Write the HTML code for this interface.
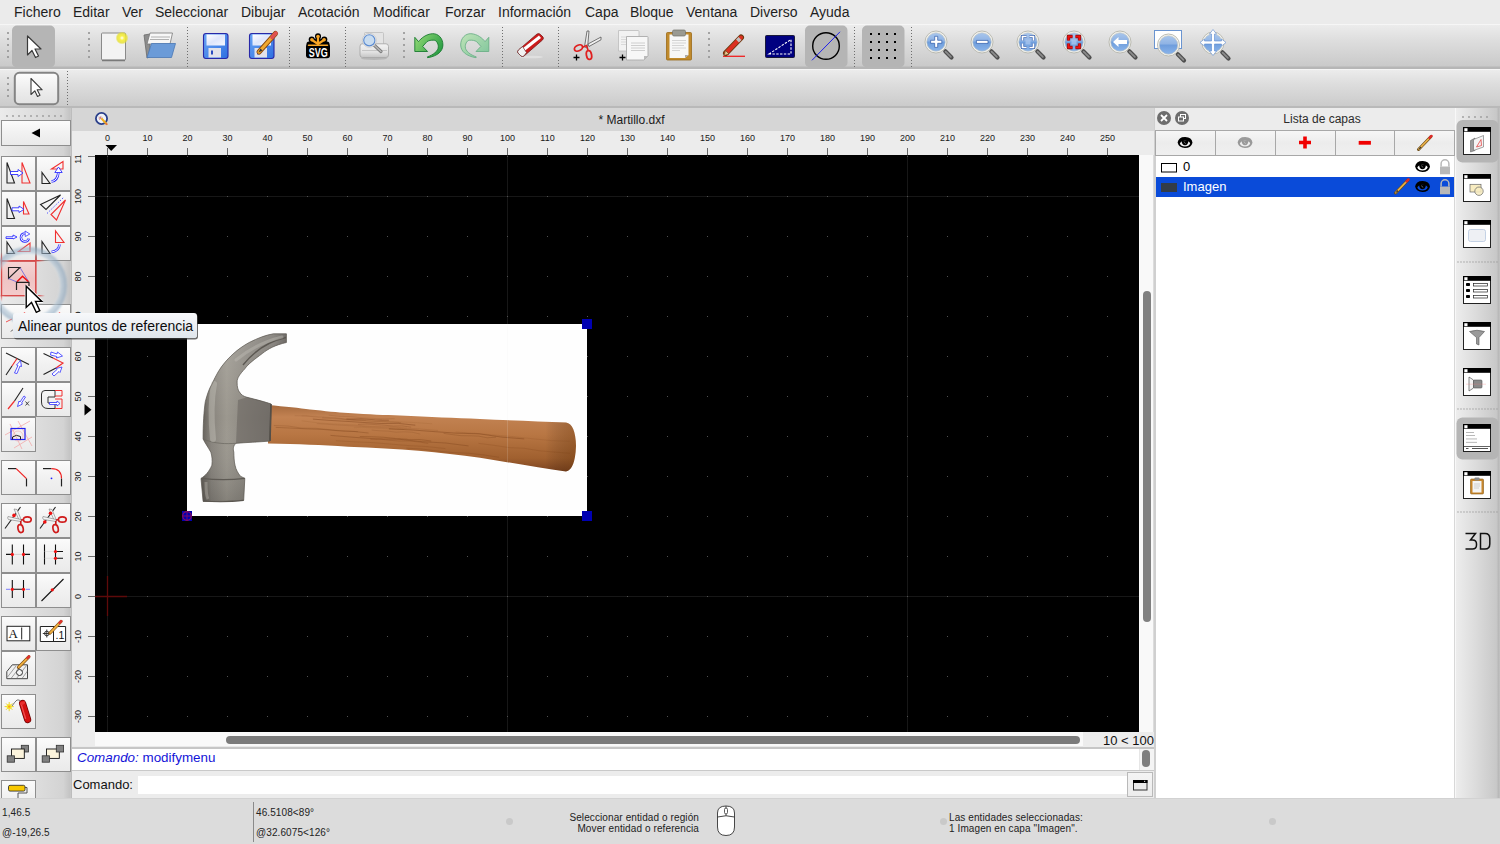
<!DOCTYPE html>
<html><head><meta charset="utf-8">
<style>
*{box-sizing:border-box}
html,body{margin:0;padding:0}
body{width:1500px;height:844px;overflow:hidden;position:relative;background:#e9e9e9;font-family:"Liberation Sans",sans-serif;color:#000}
.a{position:absolute}
#menubar{left:0;top:0;width:1500px;height:24px;background:#ebebeb}
#menubar span{position:absolute;top:3.5px;font-size:14px;line-height:16px;color:#1e1e1e}
#tb1{left:0;top:24px;width:1500px;height:45px;background:linear-gradient(#f6f6f6 0px,#f6f6f6 1px,#ececec 1px,#dedede 16px,#cacaca 42px,#b6b6b6 43px,#b6b6b6 45px)}
#tb2{left:0;top:69px;width:1500px;height:39px;background:linear-gradient(#f6f6f6 0px,#f6f6f6 1px,#ececec 1px,#dedede 14px,#cbcbcb 37px,#b8b8b8 37px,#b8b8b8 39px)}
.vdots{position:absolute;width:3px;background-image:radial-gradient(circle,#8a8a8a 0.9px,transparent 1.2px);background-size:3px 6px}
.vsep{position:absolute;width:1px;background-image:linear-gradient(#7a7a7a 50%,transparent 50%);background-size:1px 3px}
.hdots{position:absolute;height:3px;background-image:radial-gradient(circle,#9a9a9a 0.9px,transparent 1.2px);background-size:6px 3px}
.sel{position:absolute;background:#b8b8b8;border-radius:5px}
.ic{position:absolute;overflow:visible}
#left{left:0;top:107px;width:72px;height:691px;background:linear-gradient(90deg,#ebebeb,#d3d3d3 88%,#c4c4c4 97%,#d0d0d0)}
.tb{position:absolute;width:35px;height:35px;border:1px solid #8e8e8e;background:linear-gradient(#fbfbfb,#f1f1f1 50%,#eaeaea)}
.tb svg{position:absolute;left:0;top:0}
#mdititle{left:72px;top:107px;width:1082px;height:24px;background:#d6d6d6}
#rulert{left:72px;top:131px;width:1082px;height:24px;background:#ececec}
#rulerl{left:72px;top:155px;width:23px;height:591px;background:#ececec}
#canvas{left:95px;top:155px;width:1044px;height:577px;background:#000;overflow:hidden}
#vscroll{left:1139px;top:155px;width:15px;height:577px;background:#f9f9f9;border-right:1px solid #dcdcdc}
#hscroll{left:95px;top:732px;width:988px;height:14px;background:#f9f9f9}
#zoomlbl{left:1083px;top:732px;width:71px;height:15px;background:#ececec;font-size:13px;line-height:17px;text-align:right;color:#111}
#cmdsep{left:72px;top:746px;width:1082px;height:3px;background:linear-gradient(#e6e6e6,#bdbdbd)}
#hist{left:72px;top:749px;width:1082px;height:22px;background:#fff;border-bottom:1px solid #c6c6c6}
#cmdrow{left:72px;top:771px;width:1082px;height:27px;background:#ececec}
#dock{left:1154px;top:107px;width:301px;height:691px;background:#ececec}
#rtb{left:1455px;top:107px;width:45px;height:692px;background:linear-gradient(90deg,#f8f8f8 0px,#f8f8f8 1px,#ededed 1px,#dcdcdc 45%,#c8c8c8 92%,#b8b8b8 97%,#c4c4c4)}
#status{left:0;top:798px;width:1500px;height:46px;background:#dcdcdc;border-top:1px solid #d2d2d2}
.st{position:absolute;font-size:10px;line-height:12px;color:#222;white-space:nowrap;letter-spacing:0.1px}
.dot{position:absolute;width:7px;height:7px;border-radius:50%;background:#c9c9c9}
</style></head><body>

<div id="menubar" class="a">
<span style="left:14px">Fichero</span>
<span style="left:73px">Editar</span>
<span style="left:122px">Ver</span>
<span style="left:155px">Seleccionar</span>
<span style="left:241px">Dibujar</span>
<span style="left:298px">Acotación</span>
<span style="left:373px">Modificar</span>
<span style="left:445px">Forzar</span>
<span style="left:498px">Información</span>
<span style="left:585px">Capa</span>
<span style="left:630px">Bloque</span>
<span style="left:686px">Ventana</span>
<span style="left:750px">Diverso</span>
<span style="left:810px">Ayuda</span>
</div>

<div id="tb1" class="a"></div>
<div id="tb2" class="a"></div>

<svg class="a" style="left:0;top:0" width="1500" height="107" viewBox="0 0 1500 107">
<defs>
<linearGradient id="gLens" x1="0" y1="0" x2="0" y2="1"><stop offset="0" stop-color="#a9c6ec"/><stop offset="0.45" stop-color="#8fb3e4"/><stop offset="0.5" stop-color="#6e9ddc"/><stop offset="1" stop-color="#8ab4ea"/></linearGradient>
<radialGradient id="gRing" cx="0.5" cy="0.5" r="0.5"><stop offset="0.8" stop-color="#f4f4ee"/><stop offset="0.9" stop-color="#d4d4cc"/><stop offset="1" stop-color="#a8a8a0"/></radialGradient>
<linearGradient id="gFloppy" x1="0" y1="0" x2="1" y2="1"><stop offset="0" stop-color="#6aa5f5"/><stop offset="1" stop-color="#2f6fe0"/></linearGradient>
<linearGradient id="gLabel" x1="0" y1="0" x2="1" y2="1"><stop offset="0" stop-color="#ffffff"/><stop offset="0.5" stop-color="#dfe6fb"/><stop offset="1" stop-color="#f4f6ff"/></linearGradient>
<linearGradient id="gGreen" x1="0" y1="0" x2="1" y2="0.6"><stop offset="0" stop-color="#98dc78"/><stop offset="1" stop-color="#2a9e44"/></linearGradient>
<linearGradient id="gGreenR" x1="1" y1="0" x2="0" y2="1"><stop offset="0" stop-color="#c0e4b8"/><stop offset="1" stop-color="#7cc49a"/></linearGradient>
<radialGradient id="gGlow" cx="0.5" cy="0.5" r="0.5"><stop offset="0" stop-color="#ffffff"/><stop offset="0.35" stop-color="#f8f04a"/><stop offset="0.75" stop-color="#e6e030" stop-opacity="0.8"/><stop offset="1" stop-color="#e6e030" stop-opacity="0"/></radialGradient>
<g id="mag">
 <path d="M9.3 9.3 L15.5 15.5" stroke="#4e4e4e" stroke-width="4.2" stroke-linecap="round"/>
 <path d="M9.6 9.6 L15.2 15.2" stroke="#8c8c8c" stroke-width="1.8" stroke-linecap="round" stroke-dasharray="1 0.6"/>
 <circle cx="0" cy="0" r="11" fill="#f6f6f2" stroke="#b4b4aa" stroke-width="0.9"/>
 <circle cx="0" cy="0" r="9.3" fill="url(#gLens)" stroke="#c8c8be" stroke-width="0.6"/>
</g>
</defs>
<!-- toolbar 1 handles -->
<g fill="#8e8e8e">
 <circle cx="8" cy="33" r="1"/><circle cx="8" cy="39" r="1"/><circle cx="8" cy="45" r="1"/><circle cx="8" cy="51" r="1"/><circle cx="8" cy="57" r="1"/>
 <circle cx="89" cy="33" r="1"/><circle cx="89" cy="39" r="1"/><circle cx="89" cy="45" r="1"/><circle cx="89" cy="51" r="1"/><circle cx="89" cy="57" r="1"/>
 <circle cx="404" cy="33" r="1"/><circle cx="404" cy="39" r="1"/><circle cx="404" cy="45" r="1"/><circle cx="404" cy="51" r="1"/><circle cx="404" cy="57" r="1"/>
 <circle cx="709" cy="33" r="1"/><circle cx="709" cy="39" r="1"/><circle cx="709" cy="45" r="1"/><circle cx="709" cy="51" r="1"/><circle cx="709" cy="57" r="1"/>
 <circle cx="8" cy="78" r="1"/><circle cx="8" cy="84" r="1"/><circle cx="8" cy="90" r="1"/><circle cx="8" cy="96" r="1"/>
</g>
<g stroke="#6e6e6e" stroke-width="1" stroke-dasharray="1 2">
 <path d="M187.5 27V67M289.5 27V67M345.5 27V67M502.5 27V67M558.5 27V67M854.5 27V67M911.5 27V67"/>
 <path d="M67.5 71V106"/>
</g>
<!-- selected buttons -->
<rect x="12" y="25.5" width="43" height="42" rx="5" fill="#b5b5b5"/>
<rect x="805" y="25.5" width="42.5" height="42" rx="5" fill="#b5b5b5"/>
<rect x="862" y="25.5" width="42.5" height="42" rx="5" fill="#b5b5b5"/>
<!-- arrow cursor icon -->
<path d="M27.5 36 V55 L32 50.5 L35.5 57.5 L38.5 56 L35 49 H41 Z" fill="#fff" stroke="#3a3a3a" stroke-width="1.2" stroke-linejoin="round"/>
<!-- new doc -->
<rect x="101.5" y="33" width="24" height="27" rx="1" fill="#f3f3f3" stroke="#8a8a8a" stroke-width="1"/>
<path d="M102 60.5H125" stroke="#7a7a7a" stroke-width="1.5"/>
<circle cx="122" cy="38" r="6.5" fill="url(#gGlow)"/>
<!-- open folder -->
<path d="M144 35 L150 34 L150 57 L147 58 Z" fill="#8d8d8d" stroke="#6a6a6a" stroke-width="0.8"/>
<path d="M150 33 H172.5 L170 44 H147 Z" fill="#f6f6f6" stroke="#7a7a7a" stroke-width="0.8"/>
<path d="M151 37H170M150 39.5H169" stroke="#b0b0b0" stroke-width="1"/>
<path d="M151.5 43.5 H175.5 L171.5 57.5 H147 Z" fill="#6b9bd8" stroke="#4a77b4" stroke-width="0.8"/>
<!-- save -->
<rect x="203.5" y="33.5" width="24.5" height="25" rx="2.5" fill="url(#gFloppy)" stroke="#2828a8" stroke-width="1.1"/>
<rect x="206.5" y="34.5" width="18.5" height="11" fill="url(#gLabel)"/>
<rect x="208.5" y="48" width="12.5" height="9.5" fill="#e2e2ea"/>
<rect x="211" y="50.5" width="2" height="4" fill="#2a4cc0"/>
<!-- save as -->
<rect x="249.5" y="33.5" width="24.5" height="25" rx="2.5" fill="url(#gFloppy)" stroke="#2828a8" stroke-width="1.1"/>
<rect x="252.5" y="34.5" width="18.5" height="11" fill="url(#gLabel)"/>
<rect x="254.5" y="48" width="12.5" height="9.5" fill="#e2e2ea"/>
<rect x="257" y="50.5" width="2" height="4" fill="#2a4cc0"/>
<path d="M259 52 L275.5 33.5" stroke="#8a4a10" stroke-width="5" stroke-linecap="round"/>
<path d="M259 52 L275.5 33.5" stroke="#f0a830" stroke-width="3.2" stroke-linecap="round"/>
<path d="M272 37.5 L276 33" stroke="#e05050" stroke-width="3.5" stroke-linecap="round"/>
<path d="M258.5 52.5 L260.5 48.5 L262.5 50.5 Z" fill="#333"/>
<!-- SVG logo -->
<g>
 <rect x="306" y="43.5" width="24" height="14.8" rx="3" fill="#000"/>
 <g stroke="#000" stroke-width="5" stroke-linecap="round">
  <path d="M318 44V36.5M318 44L311.8 39.8M318 44L324.3 39.8M318 44H309M318 44H327"/>
 </g>
 <g fill="#000"><circle cx="318" cy="36.3" r="3"/><circle cx="311.7" cy="39.6" r="3"/><circle cx="324.3" cy="39.6" r="3"/></g>
 <g stroke="#f7a525" stroke-width="2.2" stroke-linecap="round">
  <path d="M318 44V37M318 44L312 40M318 44L324 40"/>
 </g>
 <g fill="#f7a525"><circle cx="318" cy="36.6" r="1.8"/><circle cx="311.9" cy="39.8" r="1.8"/><circle cx="324.1" cy="39.8" r="1.8"/></g>
 <path d="M308.5 45.3H327.5" stroke="#f7a525" stroke-width="1.5" stroke-linecap="round"/>
 <text x="318.2" y="57" font-family="Liberation Sans" font-weight="bold" font-size="13" fill="#fff" text-anchor="middle" textLength="19" lengthAdjust="spacingAndGlyphs">SVG</text>
</g>
<!-- print preview -->
<defs><linearGradient id="gPrn" x1="0" y1="0" x2="0" y2="1"><stop offset="0" stop-color="#f4f4f4"/><stop offset="0.6" stop-color="#e2e2e2"/><stop offset="1" stop-color="#c4c4c4"/></linearGradient></defs>
<ellipse cx="374" cy="58.5" rx="13" ry="1.5" fill="#000" opacity="0.12"/>
<rect x="364.5" y="32.5" width="19" height="13" rx="1" fill="#e4e4e4" stroke="#bdbdbd" stroke-width="0.8"/>
<path d="M362 43.8 H386 Q388.5 43.8 388.5 46.5 V55 Q388.5 57.5 386 57.5 H362.5 Q360 57.5 360 55 V46.5 Q360 43.8 362 43.8 Z" fill="url(#gPrn)" stroke="#a8a8a8" stroke-width="0.9"/>
<path d="M362 50.5H387" stroke="#bcbcbc" stroke-width="0.8"/>
<path d="M373.5 44.5 L381 51.5" stroke="#7a7a7a" stroke-width="3.2" stroke-linecap="round"/>
<path d="M373.5 44.5 L381 51.5" stroke="#b8b8b8" stroke-width="1.4" stroke-linecap="round"/>
<circle cx="369.3" cy="40.3" r="7" fill="#f2f2f2" stroke="#c4c4c4" stroke-width="0.8"/>
<circle cx="369.3" cy="40.3" r="5.6" fill="#c8dcf0" stroke="#5a8ad0" stroke-width="1.1"/>
<!-- undo -->
<path d="M414.8 37.3 L418.5 41.6 C421 38.5 426 34 432.7 33.7 C438 33.5 443 38 442.9 45 C442.8 51 438 56 427.6 57.7 L427.3 56.9 C433 55 438.5 51 438.3 46.7 C438.3 43 436 40 433.8 40.2 C431 40 429 40.5 427 41.6 L422.7 46.4 L427.6 51.5 L414.8 51.5 Z" fill="url(#gGreen)" stroke="#1a7a30" stroke-width="0.9" stroke-linejoin="round"/>
<!-- redo -->
<g transform="translate(903.6 0) scale(-1 1)"><path d="M414.8 37.3 L418.5 41.6 C421 38.5 426 34 432.7 33.7 C438 33.5 443 38 442.9 45 C442.8 51 438 56 427.6 57.7 L427.3 56.9 C433 55 438.5 51 438.3 46.7 C438.3 43 436 40 433.8 40.2 C431 40 429 40.5 427 41.6 L422.7 46.4 L427.6 51.5 L414.8 51.5 Z" fill="url(#gGreenR)" stroke="#6cb088" stroke-width="0.9" stroke-linejoin="round"/></g>
<!-- eraser -->
<ellipse cx="531" cy="57" rx="12" ry="1.3" fill="#e0e0e0"/>
<path d="M518.5 50 L537 34 Q539 33 540.5 34.5 L543 37 Q544 38.5 542.5 40 L524 56 Q522.5 57 521 56 L518 53 Q517 51.5 518.5 50 Z" fill="#cc1a1a" stroke="#7a1a1a" stroke-width="0.8"/>
<path d="M522.5 48.5 L539 35.5 L541 38 L524.5 51 Z" fill="#ffffff"/>
<path d="M518.5 50 L522.5 46.5 L526.5 52.5 L524 56 Q522.5 57 521 56 L518 53 Q517 51.5 518.5 50 Z" fill="#f2f2f2" stroke="#6a3030" stroke-width="0.7"/>
<!-- cut -->
<path d="M587 31 L584.5 47 L587.5 48 L589 31 Z" fill="#f0f0f0" stroke="#555" stroke-width="0.8"/>
<path d="M601 37 L588 44 L589 46.5 L601 39.8 Z" fill="#f0f0f0" stroke="#555" stroke-width="0.8"/>
<ellipse cx="578.5" cy="48" rx="4.3" ry="2.8" transform="rotate(-25 578.5 48)" fill="none" stroke="#e02020" stroke-width="1.8"/>
<ellipse cx="589" cy="55" rx="2.6" ry="4.4" transform="rotate(-10 589 55)" fill="none" stroke="#e02020" stroke-width="1.8"/>
<path d="M582 47.5 L586.5 45.5 L588 50" stroke="#e02020" stroke-width="1.6" fill="none"/>
<path d="M576.5 54.5V60.5M573.5 57.5H579.5" stroke="#000" stroke-width="1.3"/>
<!-- copy -->
<path d="M618.5 30.5 H638 Q639 30.5 639 31.5 V51 H618.5 Z" fill="#f2f2f2" stroke="#bdbdbd" stroke-width="0.8"/>
<path d="M621 37H636M621 39.5H636M621 42H636M621 44.5H636" stroke="#d2d2d2" stroke-width="0.8"/>
<path d="M626.5 36.5 H647.5 Q648 36.5 648 37.5 V56 L644 60 H626.5 Z" fill="#f7f7f7" stroke="#aaaaaa" stroke-width="0.9"/>
<path d="M644 60 V56 H648 Z" fill="#bbb"/>
<path d="M631 43H645M631 45.5H645M631 48H645M631 50.5H645" stroke="#c8c8c8" stroke-width="0.9"/>
<path d="M622.5 54.5V60.5M619.5 57.5H625.5" stroke="#000" stroke-width="1.3"/>
<!-- paste -->
<rect x="666.5" y="32.5" width="25" height="27.5" rx="1" fill="#c08a2c" stroke="#9a6a18" stroke-width="0.8"/>
<path d="M669.5 34.5 H688.5 V55 L685 58 H669.5 Z" fill="#f7f7f7"/>
<path d="M685 58 V55 H688.5 Z" fill="#aaa"/>
<path d="M672 40.5H686M672 43H686M672 45.5H684M672 48H686M672 50.5H680" stroke="#cfcfcf" stroke-width="0.9"/>
<rect x="672.5" y="30" width="13" height="6" rx="1.5" fill="#9a9a92" stroke="#707068" stroke-width="0.7"/>
<!-- pencil -->
<path d="M723 56.3H745" stroke="#f02020" stroke-width="1.3"/>
<path d="M726 53 L741 37.5" stroke="#6a3a10" stroke-width="6" stroke-linecap="round"/>
<path d="M726 53 L741 37.5" stroke="#dc3020" stroke-width="4" stroke-linecap="round"/>
<path d="M737.5 41 L740 38.5" stroke="#c0c0c0" stroke-width="4"/>
<path d="M724 55.5 L725.5 50.5 L729 54 Z" fill="#e8c890" stroke="#5a3a10" stroke-width="0.6"/>
<!-- blue triangle -->
<rect x="765.5" y="35.5" width="29" height="22" rx="1" fill="#000080" stroke="#1a1a3a" stroke-width="1"/>
<path d="M769 54 L791 39.5 V54 Z" fill="none" stroke="#fff" stroke-width="1.1" stroke-dasharray="2.4 1.4"/>
<!-- circle with line -->
<circle cx="826" cy="46" r="13.3" fill="none" stroke="#000" stroke-width="1.4"/>
<path d="M812 60.3 L840 31.8" stroke="#1010f0" stroke-width="0.9"/>
<!-- grid dots -->
<g fill="#000">
 <rect x="870" y="33" width="2" height="2"/><rect x="878" y="33" width="2" height="2"/><rect x="886" y="33" width="2" height="2"/><rect x="894" y="33" width="2" height="2"/>
 <rect x="870" y="41" width="2" height="2"/><rect x="878" y="41" width="2" height="2"/><rect x="886" y="41" width="2" height="2"/><rect x="894" y="41" width="2" height="2"/>
 <rect x="870" y="49" width="2" height="2"/><rect x="878" y="49" width="2" height="2"/><rect x="886" y="49" width="2" height="2"/><rect x="894" y="49" width="2" height="2"/>
 <rect x="870" y="57" width="2" height="2"/><rect x="878" y="57" width="2" height="2"/><rect x="886" y="57" width="2" height="2"/><rect x="894" y="57" width="2" height="2"/>
</g>
<!-- zoom icons -->
<use href="#mag" x="936" y="42"/>
<path d="M934.7 36.3 H937.7 V40.3 H941.8 V43.3 H937.7 V47.4 H934.7 V43.3 H930.6 V40.3 H934.7 Z" fill="#fff" stroke="#2a58a8" stroke-width="0.7"/>
<use href="#mag" x="982" y="42"/>
<path d="M976.4 40.4 H988 V43.4 H976.4 Z" fill="#fff" stroke="#2a58a8" stroke-width="0.7"/>
<use href="#mag" x="1028" y="42"/>
<path d="M1022.5 40.5V36.5H1026.5M1029.5 36.5H1033.5V40.5M1033.5 43.5V47.5H1029.5M1026.5 47.5H1022.5V43.5" stroke="#3a64b0" stroke-width="3.2" fill="none"/><path d="M1022.5 40.5V36.5H1026.5M1029.5 36.5H1033.5V40.5M1033.5 43.5V47.5H1029.5M1026.5 47.5H1022.5V43.5" stroke="#fff" stroke-width="1.7" fill="none"/><rect x="1025.5" y="39.5" width="5" height="5" fill="#a8c4ec" opacity="0.8"/>
<use href="#mag" x="1074" y="42"/>
<path d="M1068.5 40.5V36.5H1072.5M1075.5 36.5H1079.5V40.5M1079.5 43.5V47.5H1075.5M1072.5 47.5H1068.5V43.5" stroke="#7a1010" stroke-width="3.3" fill="none"/><path d="M1068.5 40.5V36.5H1072.5M1075.5 36.5H1079.5V40.5M1079.5 43.5V47.5H1075.5M1072.5 47.5H1068.5V43.5" stroke="#f01010" stroke-width="2" fill="none"/><rect x="1071.5" y="39.5" width="5" height="5" fill="#a8c4ec" opacity="0.8"/>
<use href="#mag" x="1120" y="42"/>
<path d="M1113 42 L1118.5 37 V40 H1127 V44 H1118.5 V47 Z" fill="#fff"/>
<rect x="1154.5" y="30.5" width="27" height="18" fill="#fff" stroke="#6a94d0" stroke-width="1"/>
<use href="#mag" x="1168.5" y="45"/>
<use href="#mag" x="1213" y="43"/>
<g fill="#fff" stroke="#5a8ad0" stroke-width="0.6">
 <path d="M1213 29.5 L1216.5 34 H1214.5 V41 H1221.5 V39 L1226 42.5 L1221.5 46 V44 H1214.5 V51 H1216.5 L1213 55.5 L1209.5 51 H1211.5 V44 H1204.5 V46 L1200 42.5 L1204.5 39 V41 H1211.5 V34 H1209.5 Z"/>
</g>
<!-- toolbar 2 button -->
<rect x="14.8" y="72.8" width="43.4" height="31.4" rx="4.5" fill="url(#gBtn2)" stroke="#848484" stroke-width="2"/>
<path d="M31 78.5 V94.5 L34.8 90.8 L37.5 96.5 L40 95.3 L37.2 89.8 H42.2 Z" fill="#fff" stroke="#3a3a3a" stroke-width="1.1" stroke-linejoin="round"/>
<linearGradient id="gBtn2" x1="0" y1="0" x2="0" y2="1"><stop offset="0" stop-color="#fdfdfd"/><stop offset="0.5" stop-color="#eeeeee"/><stop offset="1" stop-color="#e2e2e2"/></linearGradient>
</svg>

<div id="left" class="a"></div>
<div class="tb" style="left:1px;top:120px;width:70px;height:26px"></div>
<div class="tb" style="left:1px;top:156px"></div>
<div class="tb" style="left:36px;top:156px"></div>
<div class="tb" style="left:1px;top:191px"></div>
<div class="tb" style="left:36px;top:191px"></div>
<div class="tb" style="left:1px;top:226px"></div>
<div class="tb" style="left:36px;top:226px"></div>
<div class="tb" style="left:1px;top:261px;background:linear-gradient(#f4d4d4,#efc4c4 50%,#f3caca);border-color:#d06a6a"></div>
<div class="tb" style="left:1px;top:304px;width:70px"></div>
<div class="tb" style="left:1px;top:347px"></div>
<div class="tb" style="left:36px;top:347px"></div>
<div class="tb" style="left:1px;top:382px"></div>
<div class="tb" style="left:36px;top:382px"></div>
<div class="tb" style="left:1px;top:417px"></div>
<div class="tb" style="left:1px;top:460px"></div>
<div class="tb" style="left:36px;top:460px"></div>
<div class="tb" style="left:1px;top:503px"></div>
<div class="tb" style="left:36px;top:503px"></div>
<div class="tb" style="left:1px;top:538px"></div>
<div class="tb" style="left:36px;top:538px"></div>
<div class="tb" style="left:1px;top:573px"></div>
<div class="tb" style="left:36px;top:573px"></div>
<div class="tb" style="left:1px;top:616px"></div>
<div class="tb" style="left:36px;top:616px"></div>
<div class="tb" style="left:1px;top:651px"></div>
<div class="tb" style="left:1px;top:694px"></div>
<div class="tb" style="left:1px;top:737px"></div>
<div class="tb" style="left:36px;top:737px"></div>
<div class="tb" style="left:1px;top:780px"></div>

<svg class="a" style="left:0;top:107px" width="72" height="691" viewBox="0 107 72 691">
<defs>
<marker id="ah" viewBox="0 0 6 6" refX="3" refY="3" markerWidth="4" markerHeight="4" orient="auto"><path d="M0 0L6 3L0 6Z" fill="#2020ff"/></marker>
</defs>
<g fill="#9a9a9a"><circle cx="7" cy="116" r="0.9"/><circle cx="13" cy="116" r="0.9"/><circle cx="19" cy="116" r="0.9"/><circle cx="25" cy="116" r="0.9"/><circle cx="31" cy="116" r="0.9"/><circle cx="37" cy="116" r="0.9"/><circle cx="43" cy="116" r="0.9"/><circle cx="49" cy="116" r="0.9"/><circle cx="55" cy="116" r="0.9"/><circle cx="61" cy="116" r="0.9"/></g>
<path d="M31.5 133 L40 128.5 V137.5 Z" fill="#000"/>
<g fill="none" stroke-width="1.1" stroke-linejoin="miter">
<!-- B1 -->
<path d="M7 162.5 V183 H14.5 Z" stroke="#222"/>
<path d="M22 162.5 V183 H30 Z" stroke="#f03030"/>
<path d="M10.5 171.5 H18 V169.5 L23 173 L18 176.5 V174.5 H10.5 Z" fill="#fff" stroke="#3030ff" stroke-width="0.9"/>
<path d="M42 172.5 V183.5 H50 Z" stroke="#222"/>
<path d="M51.5 169 L63 161.5 V169 Z" stroke="#f03030"/>
<path d="M51.5 181.5 Q57.5 181 58.5 172" stroke="#3030ff" stroke-width="2.6"/>
<path d="M51.5 181.5 Q57.5 181 58.5 172" stroke="#fff" stroke-width="1"/>
<path d="M54.8 172.5 L58.5 167 L62.2 172.5 Z" fill="#fff" stroke="#3030ff" stroke-width="0.9"/>
<!-- B2 -->
<path d="M7 198.5 V218.5 H14.5 Z" stroke="#222"/>
<path d="M23.5 201.5 V214 H29 Z" stroke="#f03030"/>
<path d="M12 207.8 H19 V206 L24 209.3 L19 212.5 V210.8 H12 Z" fill="#fff" stroke="#3030ff" stroke-width="0.9"/>
<path d="M40.5 204.5 L60.5 195 L46 209.5 Z" stroke="#222"/>
<path d="M65.5 200 L51 214.5 L56.5 220 Z" stroke="#f03030"/>
<path d="M47 213.5 L64 197" stroke="#4040ff" stroke-dasharray="1.5 1.5" stroke-width="0.9"/>
<!-- B3 -->
<path d="M6 236.8 H13 V235 L17 237 L13 239 V238.5 H6 Z" fill="#fff" stroke="#3030ff" stroke-width="0.9"/>
<path d="M24.5 233.5 A4 4 0 1 0 28.8 238.5" stroke="#3030ff" stroke-width="2.4"/>
<path d="M24.5 233.5 A4 4 0 1 0 28.8 238.5" stroke="#fff" stroke-width="0.9"/>
<path d="M25 231 L29.8 234 L25.3 236.5 Z" fill="#fff" stroke="#3030ff" stroke-width="0.8"/>
<path d="M7 242 V253.5 H14.5 Z" stroke="#222"/>
<path d="M18.5 251.5 L30 243 V251.5 Z" stroke="#f03030"/>
<path d="M55.5 231 V242.5 H64 Z" stroke="#f03030"/>
<path d="M42 241.5 V253.5 H50 Z" stroke="#222"/>
<path d="M51.5 252 Q59 251 59.5 244.5" stroke="#3030ff" stroke-width="2.6"/>
<path d="M51.5 252 Q59 251 59.5 244.5" stroke="#fff" stroke-width="1"/>
<!-- B4 pink -->
<path d="M8.5 267.5 H20 L8.5 278.5 Z" stroke="#222"/>
<path d="M20 267.5 L28.5 281.5 M8.5 278.5 L17 282" stroke="#5050e0" stroke-width="0.7"/>
<path d="M17 281.8 L22.5 276.2 L28.5 281.8" stroke="#f01010" stroke-width="1.5"/>
<path d="M16.5 290 V282.3 H29 V286" stroke="#222" stroke-width="1.2"/>
<!-- C wide -->
<path d="M6 322 L12 319" stroke="#f04040" stroke-width="0.9"/>
<circle cx="24.5" cy="313" r="0.8" fill="#f04040" stroke="none"/>
<circle cx="59.5" cy="313" r="0.8" fill="#f04040" stroke="none"/>
<path d="M11 331.5 L13 329.5" stroke="#333" stroke-width="0.9"/>
<!-- D1 -->
<path d="M6 353 L29 364.5" stroke="#222"/>
<path d="M17 358.5 L12 366" stroke="#f03030" stroke-width="1.2"/>
<path d="M12 366 L6 375" stroke="#222"/>
<path d="M14.5 373 L18 365.5 L16.5 365 L20.5 360.5 L21.5 366.5 L20 366 L17 373.5 Z" fill="#fff" stroke="#3030ff" stroke-width="0.8"/>
<path d="M43.5 353.5 L53 358" stroke="#222"/>
<path d="M53 358 L63 363 L56 368" stroke="#f03030" stroke-width="1.2"/>
<path d="M56 368 L43.5 374.5" stroke="#222"/>
<path d="M51 352 L57 354 L57.5 352 L62.5 356 L56.5 358 L56.8 356.5 L50.5 355 Z" fill="#fff" stroke="#3030ff" stroke-width="0.8"/>
<path d="M52 374 L57 369.5 L56 368.5 L62 367 L60 372.5 L59 371.5 L54 376 Z" fill="#fff" stroke="#3030ff" stroke-width="0.8"/>
<!-- D2 -->
<path d="M23 388 L14.5 401" stroke="#222"/>
<path d="M14.5 401 L8 409" stroke="#f03030" stroke-width="1.2"/>
<path d="M17.5 406.5 L19 401 L20 402 L24 396 L25.5 397 L21.5 403 L22.5 404 Z" fill="#fff" stroke="#3030ff" stroke-width="0.8"/>
<path d="M25.5 401.5 L29 405.5 M29 401.5 L25.5 405.5" stroke="#333" stroke-width="0.9"/>
<path d="M55 390.5 H45 Q41.5 390.5 41.5 394 V402 Q41.5 408.5 48 408.5 H55 V403 H48 V397 H55 Z" stroke="#333" stroke-width="1"/>
<path d="M55 390.5 H62 V396 H55 M55 399 H62 V408.5 H55" stroke="#f03030" stroke-width="1"/>
<path d="M49.5 402.5 H57 V401 L60 403.5 L57 406 V404.5 H49.5 Z" fill="#fff" stroke="#3030ff" stroke-width="0.8"/>
<!-- D3 -->
<path d="M5 435 L30 421 M14 448 L32 437 M18 421 L32 446 M10 424 L22 449" stroke="#f4a0a0" stroke-width="0.7"/>
<circle cx="18" cy="436" r="5" stroke="#f4b4b4" stroke-width="0.7"/>
<rect x="11" y="428.5" width="14" height="11" stroke="#2020f0" stroke-width="1.2"/>
<path d="M12.5 439.5 V437 A7 7 0 0 1 20.5 436.5 V439.5" stroke="#222" stroke-width="1"/>
<!-- E -->
<path d="M8 468.6 H16.2" stroke="#222" stroke-width="1.2"/>
<path d="M16.2 468.6 L26.5 478.6" stroke="#f02020" stroke-width="1.2"/>
<path d="M26.5 478.6 V486.4" stroke="#222" stroke-width="1.2"/>
<path d="M43 468.6 H51.5" stroke="#222" stroke-width="1.2"/>
<path d="M51.5 468.6 Q61.5 468.6 61.5 478.6" stroke="#f02020" stroke-width="1.2"/>
<path d="M61.5 478.6 V486.4" stroke="#222" stroke-width="1.2"/>
<circle cx="51.5" cy="478.3" r="0.9" fill="#2020ff" stroke="none"/>
<!-- F1 scissors -->
<g transform="translate(0 0)">
<path d="M5 528.5 L20.5 507" stroke="#222" stroke-width="1.1"/>
<path d="M14 509 L17 509.5 L21.5 520.5 L19.5 521 Z" fill="#f4f4f4" stroke="#777" stroke-width="0.6"/>
<path d="M8 516.5 L21 519.5 L21 521.5 L8.5 519.5 Q7 518 8 516.5 Z" fill="#f4f4f4" stroke="#777" stroke-width="0.6"/>
<path d="M21 520 L23.5 519.8 M20.8 521 L20.8 524.5" stroke="#c81818" stroke-width="1.6"/>
<ellipse cx="27.3" cy="519.5" rx="3.9" ry="2.7" stroke="#d01c1c" stroke-width="1.7"/>
<ellipse cx="20.6" cy="528.6" rx="2.6" ry="4" transform="rotate(-12 20.6 528.6)" stroke="#d01c1c" stroke-width="1.7"/>
<circle cx="14" cy="515.4" r="1.8" fill="#f01010" stroke="none"/>
</g>
<g transform="translate(35 0)">
<path d="M5 528.5 L20.5 507" stroke="#222" stroke-width="1.1"/>
<path d="M14 509 L17 509.5 L21.5 520.5 L19.5 521 Z" fill="#f4f4f4" stroke="#777" stroke-width="0.6"/>
<path d="M8 516.5 L21 519.5 L21 521.5 L8.5 519.5 Q7 518 8 516.5 Z" fill="#f4f4f4" stroke="#777" stroke-width="0.6"/>
<path d="M21 520 L23.5 519.8 M20.8 521 L20.8 524.5" stroke="#c81818" stroke-width="1.6"/>
<ellipse cx="27.3" cy="519.5" rx="3.9" ry="2.7" stroke="#d01c1c" stroke-width="1.7"/>
<ellipse cx="20.6" cy="528.6" rx="2.6" ry="4" transform="rotate(-12 20.6 528.6)" stroke="#d01c1c" stroke-width="1.7"/>
<circle cx="15.5" cy="513.2" r="1.8" fill="#f01010" stroke="none"/>
<circle cx="9.8" cy="522" r="1.8" fill="#f01010" stroke="none"/>
</g>
<!-- F2 -->
<path d="M12.3 544.5 V564.5 M23.5 544.5 V564.5 M6 554.4 H12.3 M23.5 554.4 H30" stroke="#111" stroke-width="1.1"/>
<path d="M12.3 554.4 H23.5" stroke="#bbb" stroke-width="0.6"/>
<circle cx="12.3" cy="554.4" r="1.6" fill="#f01010" stroke="none"/>
<circle cx="23.5" cy="554.4" r="1.6" fill="#f01010" stroke="none"/>
<path d="M44.5 544.5 V564.5 M55.5 544.5 V564.5 M55.5 551.5 H63 M55.5 558.3 H63" stroke="#111" stroke-width="1.1"/>
<path d="M44.5 551.5 H55.5 M44.5 558.3 H55.5" stroke="#bbb" stroke-width="0.6" stroke-dasharray="1 1"/>
<circle cx="55.5" cy="551.5" r="1.6" fill="#f01010" stroke="none"/>
<circle cx="55.5" cy="558.3" r="1.6" fill="#f01010" stroke="none"/>
<!-- F3 -->
<path d="M12.3 580 V598 M23.5 580 V598 M12.3 589.3 H23.5" stroke="#111" stroke-width="1.1"/>
<path d="M6 589.3 H10 M26 589.3 H30" stroke="#6060ff" stroke-width="0.8"/>
<circle cx="12.3" cy="589.3" r="1.6" fill="#f01010" stroke="none"/>
<circle cx="23.5" cy="589.3" r="1.6" fill="#f01010" stroke="none"/>
<path d="M41.5 601 L63.5 579" stroke="#111" stroke-width="1.1"/>
<circle cx="52.3" cy="589.8" r="1.6" fill="#f01010" stroke="none"/>
<!-- G1 -->
<rect x="7" y="626.3" width="22.8" height="14.5" fill="#fff" stroke="#222" stroke-width="1"/>
<text x="8.6" y="638.3" font-family="Liberation Serif" font-size="13" fill="#111" stroke="none">A</text>
<path d="M21.7 627.5 V639.5" stroke="#222" stroke-width="1"/>
<path d="M40.3 626.5 H65.6 V641.5 H40.3 Z M53.5 626.5 V641.5" fill="#fff" stroke="#222" stroke-width="1"/>
<circle cx="46.8" cy="633.5" r="2.3" stroke="#222" stroke-width="0.9"/>
<path d="M42.8 633.5 H50.8 M46.8 629.5 V637.5" stroke="#222" stroke-width="0.9"/>
<text x="55.5" y="638.8" font-family="Liberation Sans" font-size="10.5" fill="#111" stroke="none">.1</text>
<path d="M50 633 L61 621.5" stroke="#7a4a10" stroke-width="3.2" stroke-linecap="round"/>
<path d="M50.2 632.8 L61 621.5" stroke="#f0b040" stroke-width="1.9" stroke-linecap="round"/>
<path d="M59.5 623 L61.3 621.2" stroke="#e03030" stroke-width="2.4" stroke-linecap="round"/>
<!-- G2 hatch -->
<path d="M6.8 671.6 L12.3 664.8 H27.5 V678.7 H6.8 Z" fill="#f0f0f0" stroke="#444" stroke-width="1"/>
<path d="M7.5 677 L16 666 M11 678.5 L21.5 665 M16.5 678.5 L26.5 665.5 M22 678.5 L27.5 671" stroke="#666" stroke-width="0.6"/>
<circle cx="19.5" cy="672.5" r="3" fill="#f4f4f4" stroke="#333" stroke-width="1"/>
<path d="M18.5 667.3 L28.8 656.8" stroke="#7a4a10" stroke-width="3.2" stroke-linecap="round"/>
<path d="M18.7 667.1 L28.8 656.8" stroke="#f0b040" stroke-width="1.9" stroke-linecap="round"/>
<path d="M27.4 658.2 L29.2 656.4" stroke="#e03030" stroke-width="2.4" stroke-linecap="round"/>
<!-- H dynamite -->
<path d="M21.5 703 Q19.5 698.5 17 700 Q15 701.5 12 706" stroke="#666" stroke-width="0.9"/>
<path d="M22.6 703.5 L27.6 719.5" stroke="#6a0000" stroke-width="7.2" stroke-linecap="round"/>
<path d="M22.6 703.5 L27.6 719.5" stroke="#d41010" stroke-width="5.8" stroke-linecap="round"/>
<path d="M21.3 704.5 L25.6 718.5" stroke="#f05050" stroke-width="1.2" stroke-linecap="round"/>
<ellipse cx="22.5" cy="703.2" rx="2.9" ry="1.6" transform="rotate(-17 22.5 703.2)" fill="#e83030" stroke="none"/>
<path d="M9.2 702V711.2M4.6 706.6H13.8M6 703.4L12.4 709.8M12.4 703.4L6 709.8" stroke="#e8d020" stroke-width="0.9"/>
<circle cx="9.2" cy="706.6" r="2.6" fill="#f8e830" stroke="none"/>
<circle cx="9.2" cy="706.6" r="1.2" fill="#f8a020" stroke="none"/>
<!-- I blocks -->
<rect x="21.3" y="745.3" width="7.3" height="6.7" fill="#808080" stroke="#333" stroke-width="0.8"/>
<rect x="11.5" y="749" width="12.8" height="9.4" fill="#fcf4dc" stroke="#111" stroke-width="0.9"/>
<rect x="7.2" y="755.8" width="7.3" height="6.4" fill="#808080" stroke="#333" stroke-width="0.8"/>
<rect x="46.5" y="749" width="12.8" height="9.4" fill="#fcf4dc" stroke="#111" stroke-width="0.9"/>
<rect x="56.3" y="745.3" width="7.3" height="6.7" fill="#808080" stroke="#333" stroke-width="0.8"/>
<rect x="42.2" y="755.8" width="7.3" height="6.4" fill="#808080" stroke="#333" stroke-width="0.8"/>
<!-- J roller -->
<rect x="8.5" y="785.3" width="16.5" height="5.8" rx="1.5" fill="#f8c800" stroke="#222" stroke-width="0.8"/>
<path d="M25 787.5 H27 V793 H18 V798" stroke="#444" stroke-width="0.9"/>
</g>
</svg>

<div id="mdititle" class="a"></div>
<div class="a" style="left:598.5px;top:113px;font-size:12px;line-height:14px;color:#1a1a1a;white-space:nowrap">* Martillo.dxf</div>
<svg class="a" style="left:93px;top:111px" width="18" height="16" viewBox="0 0 18 16"><circle cx="8.5" cy="7.5" r="5.6" fill="#eef2f8" stroke="#2a3f8a" stroke-width="1.8"/><path d="M6 5.5L9 8.5M8 5L6.5 9M5.5 7H10" stroke="#c06060" stroke-width="0.6"/><path d="M9 8 L13.5 13" stroke="#f0b020" stroke-width="2" stroke-linecap="round"/><path d="M12.5 12 L14.2 13.8" stroke="#e07040" stroke-width="1.6"/></svg>
<div id="rulert" class="a"></div>
<div id="rulerl" class="a"></div>
<svg class="a" style="left:72px;top:131px" width="1082" height="24" viewBox="72 131 1082 24">
<g font-family="Liberation Sans" font-size="9" fill="#1a1a1a" text-anchor="middle">
<text x="107.5" y="141">0</text>
<text x="147.5" y="141">10</text>
<text x="187.5" y="141">20</text>
<text x="227.5" y="141">30</text>
<text x="267.5" y="141">40</text>
<text x="307.5" y="141">50</text>
<text x="347.5" y="141">60</text>
<text x="387.5" y="141">70</text>
<text x="427.5" y="141">80</text>
<text x="467.5" y="141">90</text>
<text x="507.5" y="141">100</text>
<text x="547.5" y="141">110</text>
<text x="587.5" y="141">120</text>
<text x="627.5" y="141">130</text>
<text x="667.5" y="141">140</text>
<text x="707.5" y="141">150</text>
<text x="747.5" y="141">160</text>
<text x="787.5" y="141">170</text>
<text x="827.5" y="141">180</text>
<text x="867.5" y="141">190</text>
<text x="907.5" y="141">200</text>
<text x="947.5" y="141">210</text>
<text x="987.5" y="141">220</text>
<text x="1027.5" y="141">230</text>
<text x="1067.5" y="141">240</text>
<text x="1107.5" y="141">250</text>
</g><path d="M107.5 148V155M147.5 148V155M187.5 148V155M227.5 148V155M267.5 148V155M307.5 148V155M347.5 148V155M387.5 148V155M427.5 148V155M467.5 148V155M507.5 148V155M547.5 148V155M587.5 148V155M627.5 148V155M667.5 148V155M707.5 148V155M747.5 148V155M787.5 148V155M827.5 148V155M867.5 148V155M907.5 148V155M947.5 148V155M987.5 148V155M1027.5 148V155M1067.5 148V155M1107.5 148V155" stroke="#6a6a6a" stroke-width="1"/>
<path d="M105.5 145 H117 L111.2 151 Z" fill="#000"/>
</svg>
<svg class="a" style="left:72px;top:155px" width="23" height="591" viewBox="72 155 23 591">
<g font-family="Liberation Sans" font-size="9" fill="#1a1a1a" text-anchor="middle">
<text x="0" y="0" transform="translate(80.8 716.5) rotate(-90)">-30</text>
<text x="0" y="0" transform="translate(80.8 676.5) rotate(-90)">-20</text>
<text x="0" y="0" transform="translate(80.8 636.5) rotate(-90)">-10</text>
<text x="0" y="0" transform="translate(80.8 596.5) rotate(-90)">0</text>
<text x="0" y="0" transform="translate(80.8 556.5) rotate(-90)">10</text>
<text x="0" y="0" transform="translate(80.8 516.5) rotate(-90)">20</text>
<text x="0" y="0" transform="translate(80.8 476.5) rotate(-90)">30</text>
<text x="0" y="0" transform="translate(80.8 436.5) rotate(-90)">40</text>
<text x="0" y="0" transform="translate(80.8 396.5) rotate(-90)">50</text>
<text x="0" y="0" transform="translate(80.8 356.5) rotate(-90)">60</text>
<text x="0" y="0" transform="translate(80.8 316.5) rotate(-90)">70</text>
<text x="0" y="0" transform="translate(80.8 276.5) rotate(-90)">80</text>
<text x="0" y="0" transform="translate(80.8 236.5) rotate(-90)">90</text>
<text x="0" y="0" transform="translate(80.8 196.5) rotate(-90)">100</text>
<text x="0" y="0" transform="translate(80.8 156.5) rotate(-90)">110</text>
</g><path d="M88 716.5H95M88 676.5H95M88 636.5H95M88 596.5H95M88 556.5H95M88 516.5H95M88 476.5H95M88 436.5H95M88 396.5H95M88 356.5H95M88 316.5H95M88 276.5H95M88 236.5H95M88 196.5H95M88 156.5H95" stroke="#6a6a6a" stroke-width="1"/>
<path d="M84.5 404 V415.5 L91.5 409.7 Z" fill="#000"/>
</svg>
<svg class="a" style="left:95px;top:155px" width="1044" height="577" viewBox="95 155 1044 577">
<rect x="95" y="155" width="1044" height="577" fill="#000"/>
<path d="M107.5 155V732M507.5 155V732M907.5 155V732M95 196.5H1139M95 596.5H1139" stroke="#171717" stroke-width="1"/>
<path d="M107 156h1v1h-1zM107 196h1v1h-1zM107 236h1v1h-1zM107 276h1v1h-1zM107 316h1v1h-1zM107 356h1v1h-1zM107 396h1v1h-1zM107 436h1v1h-1zM107 476h1v1h-1zM107 516h1v1h-1zM107 556h1v1h-1zM107 596h1v1h-1zM107 636h1v1h-1zM107 676h1v1h-1zM107 716h1v1h-1zM147 156h1v1h-1zM147 196h1v1h-1zM147 236h1v1h-1zM147 276h1v1h-1zM147 316h1v1h-1zM147 356h1v1h-1zM147 396h1v1h-1zM147 436h1v1h-1zM147 476h1v1h-1zM147 516h1v1h-1zM147 556h1v1h-1zM147 596h1v1h-1zM147 636h1v1h-1zM147 676h1v1h-1zM147 716h1v1h-1zM187 156h1v1h-1zM187 196h1v1h-1zM187 236h1v1h-1zM187 276h1v1h-1zM187 316h1v1h-1zM187 356h1v1h-1zM187 396h1v1h-1zM187 436h1v1h-1zM187 476h1v1h-1zM187 516h1v1h-1zM187 556h1v1h-1zM187 596h1v1h-1zM187 636h1v1h-1zM187 676h1v1h-1zM187 716h1v1h-1zM227 156h1v1h-1zM227 196h1v1h-1zM227 236h1v1h-1zM227 276h1v1h-1zM227 316h1v1h-1zM227 356h1v1h-1zM227 396h1v1h-1zM227 436h1v1h-1zM227 476h1v1h-1zM227 516h1v1h-1zM227 556h1v1h-1zM227 596h1v1h-1zM227 636h1v1h-1zM227 676h1v1h-1zM227 716h1v1h-1zM267 156h1v1h-1zM267 196h1v1h-1zM267 236h1v1h-1zM267 276h1v1h-1zM267 316h1v1h-1zM267 356h1v1h-1zM267 396h1v1h-1zM267 436h1v1h-1zM267 476h1v1h-1zM267 516h1v1h-1zM267 556h1v1h-1zM267 596h1v1h-1zM267 636h1v1h-1zM267 676h1v1h-1zM267 716h1v1h-1zM307 156h1v1h-1zM307 196h1v1h-1zM307 236h1v1h-1zM307 276h1v1h-1zM307 316h1v1h-1zM307 356h1v1h-1zM307 396h1v1h-1zM307 436h1v1h-1zM307 476h1v1h-1zM307 516h1v1h-1zM307 556h1v1h-1zM307 596h1v1h-1zM307 636h1v1h-1zM307 676h1v1h-1zM307 716h1v1h-1zM347 156h1v1h-1zM347 196h1v1h-1zM347 236h1v1h-1zM347 276h1v1h-1zM347 316h1v1h-1zM347 356h1v1h-1zM347 396h1v1h-1zM347 436h1v1h-1zM347 476h1v1h-1zM347 516h1v1h-1zM347 556h1v1h-1zM347 596h1v1h-1zM347 636h1v1h-1zM347 676h1v1h-1zM347 716h1v1h-1zM387 156h1v1h-1zM387 196h1v1h-1zM387 236h1v1h-1zM387 276h1v1h-1zM387 316h1v1h-1zM387 356h1v1h-1zM387 396h1v1h-1zM387 436h1v1h-1zM387 476h1v1h-1zM387 516h1v1h-1zM387 556h1v1h-1zM387 596h1v1h-1zM387 636h1v1h-1zM387 676h1v1h-1zM387 716h1v1h-1zM427 156h1v1h-1zM427 196h1v1h-1zM427 236h1v1h-1zM427 276h1v1h-1zM427 316h1v1h-1zM427 356h1v1h-1zM427 396h1v1h-1zM427 436h1v1h-1zM427 476h1v1h-1zM427 516h1v1h-1zM427 556h1v1h-1zM427 596h1v1h-1zM427 636h1v1h-1zM427 676h1v1h-1zM427 716h1v1h-1zM467 156h1v1h-1zM467 196h1v1h-1zM467 236h1v1h-1zM467 276h1v1h-1zM467 316h1v1h-1zM467 356h1v1h-1zM467 396h1v1h-1zM467 436h1v1h-1zM467 476h1v1h-1zM467 516h1v1h-1zM467 556h1v1h-1zM467 596h1v1h-1zM467 636h1v1h-1zM467 676h1v1h-1zM467 716h1v1h-1zM507 156h1v1h-1zM507 196h1v1h-1zM507 236h1v1h-1zM507 276h1v1h-1zM507 316h1v1h-1zM507 356h1v1h-1zM507 396h1v1h-1zM507 436h1v1h-1zM507 476h1v1h-1zM507 516h1v1h-1zM507 556h1v1h-1zM507 596h1v1h-1zM507 636h1v1h-1zM507 676h1v1h-1zM507 716h1v1h-1zM547 156h1v1h-1zM547 196h1v1h-1zM547 236h1v1h-1zM547 276h1v1h-1zM547 316h1v1h-1zM547 356h1v1h-1zM547 396h1v1h-1zM547 436h1v1h-1zM547 476h1v1h-1zM547 516h1v1h-1zM547 556h1v1h-1zM547 596h1v1h-1zM547 636h1v1h-1zM547 676h1v1h-1zM547 716h1v1h-1zM587 156h1v1h-1zM587 196h1v1h-1zM587 236h1v1h-1zM587 276h1v1h-1zM587 316h1v1h-1zM587 356h1v1h-1zM587 396h1v1h-1zM587 436h1v1h-1zM587 476h1v1h-1zM587 516h1v1h-1zM587 556h1v1h-1zM587 596h1v1h-1zM587 636h1v1h-1zM587 676h1v1h-1zM587 716h1v1h-1zM627 156h1v1h-1zM627 196h1v1h-1zM627 236h1v1h-1zM627 276h1v1h-1zM627 316h1v1h-1zM627 356h1v1h-1zM627 396h1v1h-1zM627 436h1v1h-1zM627 476h1v1h-1zM627 516h1v1h-1zM627 556h1v1h-1zM627 596h1v1h-1zM627 636h1v1h-1zM627 676h1v1h-1zM627 716h1v1h-1zM667 156h1v1h-1zM667 196h1v1h-1zM667 236h1v1h-1zM667 276h1v1h-1zM667 316h1v1h-1zM667 356h1v1h-1zM667 396h1v1h-1zM667 436h1v1h-1zM667 476h1v1h-1zM667 516h1v1h-1zM667 556h1v1h-1zM667 596h1v1h-1zM667 636h1v1h-1zM667 676h1v1h-1zM667 716h1v1h-1zM707 156h1v1h-1zM707 196h1v1h-1zM707 236h1v1h-1zM707 276h1v1h-1zM707 316h1v1h-1zM707 356h1v1h-1zM707 396h1v1h-1zM707 436h1v1h-1zM707 476h1v1h-1zM707 516h1v1h-1zM707 556h1v1h-1zM707 596h1v1h-1zM707 636h1v1h-1zM707 676h1v1h-1zM707 716h1v1h-1zM747 156h1v1h-1zM747 196h1v1h-1zM747 236h1v1h-1zM747 276h1v1h-1zM747 316h1v1h-1zM747 356h1v1h-1zM747 396h1v1h-1zM747 436h1v1h-1zM747 476h1v1h-1zM747 516h1v1h-1zM747 556h1v1h-1zM747 596h1v1h-1zM747 636h1v1h-1zM747 676h1v1h-1zM747 716h1v1h-1zM787 156h1v1h-1zM787 196h1v1h-1zM787 236h1v1h-1zM787 276h1v1h-1zM787 316h1v1h-1zM787 356h1v1h-1zM787 396h1v1h-1zM787 436h1v1h-1zM787 476h1v1h-1zM787 516h1v1h-1zM787 556h1v1h-1zM787 596h1v1h-1zM787 636h1v1h-1zM787 676h1v1h-1zM787 716h1v1h-1zM827 156h1v1h-1zM827 196h1v1h-1zM827 236h1v1h-1zM827 276h1v1h-1zM827 316h1v1h-1zM827 356h1v1h-1zM827 396h1v1h-1zM827 436h1v1h-1zM827 476h1v1h-1zM827 516h1v1h-1zM827 556h1v1h-1zM827 596h1v1h-1zM827 636h1v1h-1zM827 676h1v1h-1zM827 716h1v1h-1zM867 156h1v1h-1zM867 196h1v1h-1zM867 236h1v1h-1zM867 276h1v1h-1zM867 316h1v1h-1zM867 356h1v1h-1zM867 396h1v1h-1zM867 436h1v1h-1zM867 476h1v1h-1zM867 516h1v1h-1zM867 556h1v1h-1zM867 596h1v1h-1zM867 636h1v1h-1zM867 676h1v1h-1zM867 716h1v1h-1zM907 156h1v1h-1zM907 196h1v1h-1zM907 236h1v1h-1zM907 276h1v1h-1zM907 316h1v1h-1zM907 356h1v1h-1zM907 396h1v1h-1zM907 436h1v1h-1zM907 476h1v1h-1zM907 516h1v1h-1zM907 556h1v1h-1zM907 596h1v1h-1zM907 636h1v1h-1zM907 676h1v1h-1zM907 716h1v1h-1zM947 156h1v1h-1zM947 196h1v1h-1zM947 236h1v1h-1zM947 276h1v1h-1zM947 316h1v1h-1zM947 356h1v1h-1zM947 396h1v1h-1zM947 436h1v1h-1zM947 476h1v1h-1zM947 516h1v1h-1zM947 556h1v1h-1zM947 596h1v1h-1zM947 636h1v1h-1zM947 676h1v1h-1zM947 716h1v1h-1zM987 156h1v1h-1zM987 196h1v1h-1zM987 236h1v1h-1zM987 276h1v1h-1zM987 316h1v1h-1zM987 356h1v1h-1zM987 396h1v1h-1zM987 436h1v1h-1zM987 476h1v1h-1zM987 516h1v1h-1zM987 556h1v1h-1zM987 596h1v1h-1zM987 636h1v1h-1zM987 676h1v1h-1zM987 716h1v1h-1zM1027 156h1v1h-1zM1027 196h1v1h-1zM1027 236h1v1h-1zM1027 276h1v1h-1zM1027 316h1v1h-1zM1027 356h1v1h-1zM1027 396h1v1h-1zM1027 436h1v1h-1zM1027 476h1v1h-1zM1027 516h1v1h-1zM1027 556h1v1h-1zM1027 596h1v1h-1zM1027 636h1v1h-1zM1027 676h1v1h-1zM1027 716h1v1h-1zM1067 156h1v1h-1zM1067 196h1v1h-1zM1067 236h1v1h-1zM1067 276h1v1h-1zM1067 316h1v1h-1zM1067 356h1v1h-1zM1067 396h1v1h-1zM1067 436h1v1h-1zM1067 476h1v1h-1zM1067 516h1v1h-1zM1067 556h1v1h-1zM1067 596h1v1h-1zM1067 636h1v1h-1zM1067 676h1v1h-1zM1067 716h1v1h-1zM1107 156h1v1h-1zM1107 196h1v1h-1zM1107 236h1v1h-1zM1107 276h1v1h-1zM1107 316h1v1h-1zM1107 356h1v1h-1zM1107 396h1v1h-1zM1107 436h1v1h-1zM1107 476h1v1h-1zM1107 516h1v1h-1zM1107 556h1v1h-1zM1107 596h1v1h-1zM1107 636h1v1h-1zM1107 676h1v1h-1zM1107 716h1v1h-1z" fill="#505050"/>
<path d="M95 596.5H127M107.5 576V616" stroke="#5e0a0a" stroke-width="1.3"/>

<defs>
<linearGradient id="wood" x1="0" y1="0" x2="0" y2="1">
 <stop offset="0" stop-color="#a66a3e"/>
 <stop offset="0.18" stop-color="#c28252"/>
 <stop offset="0.45" stop-color="#b87643"/>
 <stop offset="0.8" stop-color="#a0602f"/>
 <stop offset="1" stop-color="#7c4420"/>
</linearGradient>
<linearGradient id="woodEnd" x1="0" y1="0" x2="1" y2="0">
 <stop offset="0" stop-color="#000" stop-opacity="0"/>
 <stop offset="0.9" stop-color="#000" stop-opacity="0"/>
 <stop offset="1" stop-color="#5a2a00" stop-opacity="0.3"/>
</linearGradient>
<linearGradient id="metal" x1="0" y1="0" x2="1" y2="0">
 <stop offset="0" stop-color="#5e5a54"/>
 <stop offset="0.12" stop-color="#87837c"/>
 <stop offset="0.3" stop-color="#9c988f"/>
 <stop offset="0.55" stop-color="#8a867f"/>
 <stop offset="0.85" stop-color="#77736d"/>
 <stop offset="1" stop-color="#58544f"/>
</linearGradient>
<linearGradient id="metalV" x1="0" y1="0" x2="0" y2="1">
 <stop offset="0" stop-color="#fff" stop-opacity="0.15"/>
 <stop offset="0.5" stop-color="#fff" stop-opacity="0"/>
 <stop offset="1" stop-color="#000" stop-opacity="0.15"/>
</linearGradient>
<clipPath id="hclip"><path d="M268 405 C285 406.5 300 408 310 409.5 C325 411 338 412.5 348 413 C370 414.5 385 415 400 415.5 C430 417 455 418 480 419 C510 420.5 540 421.5 566 422.5 Q575.5 424 576 446 Q575 470 566 471.5 C540 468 510 462.5 480 457.7 C440 452 400 448.5 348 446.7 C320 445 300 444 268 443.5 Z"/></clipPath>
<clipPath id="imgclip"><rect x="187" y="324" width="400" height="192"/></clipPath>
</defs>
<rect x="187" y="324" width="400" height="192" fill="#fefefe"/>
<g clip-path="url(#imgclip)">
<!-- handle -->
<path d="M268 405 C285 406.5 300 408 310 409.5 C325 411 338 412.5 348 413 C370 414.5 385 415 400 415.5 C430 417 455 418 480 419 C510 420.5 540 421.5 566 422.5 Q575.5 424 576 446 Q575 470 566 471.5 C540 468 510 462.5 480 457.7 C440 452 400 448.5 348 446.7 C320 445 300 444 268 443.5 Z" fill="url(#wood)"/>
<path d="M268 405 C285 406.5 300 408 310 409.5 C325 411 338 412.5 348 413 C370 414.5 385 415 400 415.5 C430 417 455 418 480 419 C510 420.5 540 421.5 566 422.5 Q575.5 424 576 446 Q575 470 566 471.5 C540 468 510 462.5 480 457.7 C440 452 400 448.5 348 446.7 C320 445 300 444 268 443.5 Z" fill="url(#woodEnd)"/>
<g clip-path="url(#hclip)">
<path d="M301.7 420.8L319.2 423.0L336.7 424.1L354.2 424.9L371.7 426.4L389.3 426.6L406.8 428.1" stroke="#6e3510" stroke-opacity="0.17" stroke-width="0.55" fill="none" stroke-linejoin="round"/>
<path d="M443.6 433.4L452.4 434.6L461.1 435.7L469.8 435.8L478.6 436.1L487.3 437.8L496.0 437.2" stroke="#6e3510" stroke-opacity="0.36" stroke-width="0.67" fill="none" stroke-linejoin="round"/>
<path d="M294.7 415.7L306.5 415.9L318.4 417.5L330.2 418.6L342.0 419.2L353.8 420.3L365.6 420.2" stroke="#6e3510" stroke-opacity="0.16" stroke-width="0.62" fill="none" stroke-linejoin="round"/>
<path d="M359.8 436.4L371.7 436.8L383.6 437.2L395.5 438.5L407.4 439.2L419.3 439.6L431.2 441.1" stroke="#6e3510" stroke-opacity="0.28" stroke-width="1.03" fill="none" stroke-linejoin="round"/>
<path d="M330.5 435.4L353.5 437.3L376.5 438.9L399.5 439.3L422.5 441.7L445.5 443.0L468.5 445.9" stroke="#6e3510" stroke-opacity="0.34" stroke-width="0.84" fill="none" stroke-linejoin="round"/>
<path d="M335.9 440.7L354.1 441.8L372.4 442.6L390.7 444.1L408.9 445.6L427.2 446.6L445.4 448.6" stroke="#6e3510" stroke-opacity="0.17" stroke-width="0.92" fill="none" stroke-linejoin="round"/>
<path d="M478.6 443.4L493.8 445.3L509.0 447.6L524.3 448.3L539.5 450.8L554.8 452.1L570.0 453.3" stroke="#6e3510" stroke-opacity="0.16" stroke-width="0.96" fill="none" stroke-linejoin="round"/>
<path d="M322.0 417.8L335.2 417.8L348.4 419.4L361.5 420.2L374.7 421.3L387.9 421.9L401.1 422.6" stroke="#6e3510" stroke-opacity="0.22" stroke-width="0.75" fill="none" stroke-linejoin="round"/>
<path d="M455.7 432.0L474.7 433.3L493.8 435.0L512.8 436.6L531.9 438.7L550.9 440.6L570.0 441.2" stroke="#6e3510" stroke-opacity="0.15" stroke-width="0.75" fill="none" stroke-linejoin="round"/>
<path d="M388.9 428.8L411.5 429.9L434.0 431.6L456.6 433.2L479.1 433.8L501.7 437.1L524.2 438.9" stroke="#6e3510" stroke-opacity="0.37" stroke-width="0.98" fill="none" stroke-linejoin="round"/>
<path d="M353.8 427.7L362.2 427.3L370.6 427.8L379.0 428.4L387.4 428.7L395.7 429.4L404.1 429.5" stroke="#6e3510" stroke-opacity="0.15" stroke-width="0.59" fill="none" stroke-linejoin="round"/>
<path d="M346.4 419.0L353.4 419.1L360.5 418.8L367.6 419.3L374.7 419.8L381.8 420.1L388.9 420.2" stroke="#6e3510" stroke-opacity="0.36" stroke-width="1.10" fill="none" stroke-linejoin="round"/>
<path d="M371.6 430.0L379.7 430.8L387.8 431.1L395.9 432.2L404.0 431.8L412.1 432.2L420.2 434.1" stroke="#6e3510" stroke-opacity="0.28" stroke-width="0.59" fill="none" stroke-linejoin="round"/>
<path d="M275.7 427.4L291.1 428.1L306.6 428.9L322.1 429.4L337.6 430.7L353.0 431.4L368.5 433.0" stroke="#6e3510" stroke-opacity="0.28" stroke-width="0.97" fill="none" stroke-linejoin="round"/>
<path d="M316.8 423.6L337.0 425.0L357.2 426.2L377.4 427.3L397.6 428.2L417.8 428.8L438.0 430.5" stroke="#6e3510" stroke-opacity="0.24" stroke-width="0.52" fill="none" stroke-linejoin="round"/>
<path d="M328.7 415.1L339.7 416.4L350.7 416.6L361.6 417.8L372.6 418.4L383.6 418.9L394.6 418.6" stroke="#6e3510" stroke-opacity="0.21" stroke-width="0.64" fill="none" stroke-linejoin="round"/>
<path d="M312.9 419.1L330.0 420.4L347.1 421.4L364.1 422.5L381.2 423.5L398.3 423.4L415.3 425.2" stroke="#6e3510" stroke-opacity="0.38" stroke-width="0.97" fill="none" stroke-linejoin="round"/>
<path d="M370.4 439.3L380.0 439.1L389.7 440.3L399.3 441.0L409.0 441.0L418.6 441.9L428.2 443.5" stroke="#6e3510" stroke-opacity="0.33" stroke-width="0.60" fill="none" stroke-linejoin="round"/>
<path d="M301.7 415.8L323.5 416.8L345.2 419.6L367.0 421.0L388.7 421.6L410.5 422.3L432.2 423.8" stroke="#6e3510" stroke-opacity="0.18" stroke-width="0.51" fill="none" stroke-linejoin="round"/>
<path d="M406.4 448.2L421.9 449.0L437.3 451.1L452.8 452.6L468.2 453.2L483.6 454.9L499.1 457.3" stroke="#6e3510" stroke-opacity="0.21" stroke-width="0.85" fill="none" stroke-linejoin="round"/>
<path d="M358.0 424.4L366.8 424.0L375.7 424.6L384.5 425.2L393.4 426.1L402.2 425.9L411.1 427.2" stroke="#6e3510" stroke-opacity="0.28" stroke-width="0.82" fill="none" stroke-linejoin="round"/>
<path d="M273.9 425.5L287.9 426.0L301.9 428.1L315.9 428.3L329.9 429.7L343.9 431.1L357.9 431.6" stroke="#6e3510" stroke-opacity="0.23" stroke-width="0.81" fill="none" stroke-linejoin="round"/>
</g>
<!-- head -->
<path d="M286.4 333.8 L286.4 342.5 C275 345 268 349 262.3 353.5 C255 359 248 364 244.8 368.8 C240 374 237 378 237.1 382 C237 387 238 390 239.3 391.8 C241 395 244 396.5 247 397.3 C258 400 265 402 271 403.9 L270 441.1 C258 442 246 442.5 236 443.3 C233 446 233 449 233.8 452.1 C234 457 234 461 235 465.2 C236 470 238 473 240.4 476.2 L244.8 478.4 L243.7 500.3 C230 501.5 215 501.8 203.1 501.4 L201 478.4 C205 476 209 472 211.9 465.2 C212.5 460 212 456 210.8 452.1 C208 447 205 443 203.1 439 C203 425 204 410 205.3 401.7 C207 395 209 389 211.9 384.2 C216 375 220 368 225 362.3 C233 353 241 347 249.2 342.5 C258 338 266 335 273.3 333.8 Z" fill="url(#metal)"/>
<path d="M286.4 333.8 L286.4 342.5 C275 345 268 349 262.3 353.5 C255 359 248 364 244.8 368.8 C240 374 237 378 237.1 382 C237 387 238 390 239.3 391.8 C241 395 244 396.5 247 397.3 C258 400 265 402 271 403.9 L270 441.1 C258 442 246 442.5 236 443.3 C233 446 233 449 233.8 452.1 C234 457 234 461 235 465.2 C236 470 238 473 240.4 476.2 L244.8 478.4 L243.7 500.3 C230 501.5 215 501.8 203.1 501.4 L201 478.4 C205 476 209 472 211.9 465.2 C212.5 460 212 456 210.8 452.1 C208 447 205 443 203.1 439 C203 425 204 410 205.3 401.7 C207 395 209 389 211.9 384.2 C216 375 220 368 225 362.3 C233 353 241 347 249.2 342.5 C258 338 266 335 273.3 333.8 Z" fill="url(#metalV)"/>
<!-- darker right face of eye -->
<path d="M247 397.3 C258 400 265 402 271 403.9 L270 441.1 C258 442 246 442.5 236 443.3 L238 400 Z" fill="#6c6862" opacity="0.6"/>
<path d="M271 403.9 L270 441.1" stroke="#4a4640" stroke-width="1.6"/>
<!-- claw slot -->
<path d="M286 337.5 C270 341 255 350 243 365" stroke="#5c5852" stroke-width="1.4" fill="none"/>
<!-- poll separation -->
<path d="M201.5 478.4 C215 480 232 480 244.8 478.4" stroke="#5e5a54" stroke-width="1.2" fill="none"/>
<path d="M203 501 C215 502 230 502 243.7 500.3" stroke="#5a5650" stroke-width="1.2" fill="none"/>
<path d="M203.1 439 C215 444 226 444 236 443.3" stroke="#6a665f" stroke-width="1" fill="none" opacity="0.7"/>
<path d="M214 384 C211 400 211 420 213 439" stroke="#c4c0b8" stroke-width="6" fill="none" opacity="0.45" stroke-linecap="round"/>
<path d="M236 360 C248 350 262 342 282 337" stroke="#c4c0b8" stroke-width="3" fill="none" opacity="0.4" stroke-linecap="round"/>
<path d="M206 482 C206 490 206 496 208 499" stroke="#bdb9b1" stroke-width="3" fill="none" opacity="0.4"/>
<path d="M286.4 333.8 L286.4 342.5 C275 345 268 349 262.3 353.5 C255 359 248 364 244.8 368.8 C240 374 237 378 237.1 382 C237 387 238 390 239.3 391.8 C241 395 244 396.5 247 397.3 C258 400 265 402 271 403.9 L270 441.1 C258 442 246 442.5 236 443.3 C233 446 233 449 233.8 452.1 C234 457 234 461 235 465.2 C236 470 238 473 240.4 476.2 L244.8 478.4 L243.7 500.3 C230 501.5 215 501.8 203.1 501.4 L201 478.4 C205 476 209 472 211.9 465.2 C212.5 460 212 456 210.8 452.1 C208 447 205 443 203.1 439 C203 425 204 410 205.3 401.7 C207 395 209 389 211.9 384.2 C216 375 220 368 225 362.3 C233 353 241 347 249.2 342.5 C258 338 266 335 273.3 333.8 Z" fill="none" stroke="#5a5650" stroke-width="0.9" opacity="0.8"/>
</g>
<path d="M507.5 324V516" stroke="#f0f0f0" stroke-width="1" opacity="0.15"/>
<rect x="582" y="319" width="10" height="10" fill="#0000b2"/>
<rect x="582" y="511" width="10" height="10" fill="#0000b2"/>
<rect x="182" y="511" width="10" height="10" fill="#0000b2"/>
<circle cx="187" cy="516" r="4.3" fill="none" stroke="#8a0a5a" stroke-width="1.2"/>
<path d="M182 516H192M187 511V521" stroke="#7a0a6a" stroke-width="1"/>

</svg>
<div id="vscroll" class="a"></div>
<div id="hscroll" class="a"></div>
<div id="zoomlbl" class="a">10 &lt; 100</div>
<div class="a" style="left:1083px;top:746px;width:71px;height:2px;background:#ececec"></div>
<div class="a" style="left:72px;top:747px;width:1082px;height:2px;background:#c6c6c6"></div>
<div class="a" style="left:72px;top:749px;width:1082px;height:22px;background:#fff;border-bottom:1px solid #c9c9c9"></div>
<div class="a" style="left:77px;top:750px;font-size:13.4px;line-height:16px;color:#1414d8;white-space:nowrap"><i>Comando:</i> modifymenu</div>
<div class="a" style="left:1139px;top:749px;width:15px;height:21px;background:#f4f4f4;border-left:1px solid #e6e6e6"></div>
<div class="a" style="left:1142px;top:750px;width:8px;height:16.5px;border-radius:4px;background:#7e7e7e"></div>
<div class="a" style="left:72px;top:771px;width:1082px;height:27px;background:#ececec"></div>
<div class="a" style="left:73px;top:777px;font-size:13px;line-height:16px;color:#111;white-space:nowrap">Comando:</div>
<div class="a" style="left:138px;top:776px;width:989px;height:18px;background:#fff"></div>
<div class="a" style="left:1127px;top:772px;width:26px;height:25px;background:linear-gradient(#f4f4f4,#ececec);border:1px solid #b9b9b9"></div>
<svg class="a" style="left:1127px;top:772px" width="26" height="25" viewBox="0 0 26 25"><rect x="6.5" y="8.5" width="13.5" height="9.5" fill="#ececec" stroke="#333" stroke-width="1"/><rect x="6" y="8" width="14.5" height="3" fill="#000"/><rect x="17" y="8.8" width="1.2" height="1.2" fill="#bbb"/></svg>
<div class="a" style="left:70.5px;top:107px;width:1.5px;height:691px;background:#bdbdbd"></div>
<div class="a" style="left:226px;top:736px;width:854px;height:8px;border-radius:4px;background:#7b7b7b"></div>
<div class="a" style="left:1143px;top:291px;width:8px;height:331px;border-radius:4px;background:#808080"></div>
<div id="dock" class="a"></div>
<div class="a" style="left:1154px;top:107px;width:1px;height:691px;background:#cfcfcf"></div>
<div class="a" style="left:1155px;top:107px;width:300px;height:24px;font-size:12px;line-height:24px;text-align:center;color:#2b2b2b;padding-left:34px">Lista de capas</div>
<div class="a" style="left:1155px;top:130px;width:300px;height:26px;background:#a8a8a8"></div>
<div class="a" style="left:1156px;top:131px;width:59px;height:24px;background:linear-gradient(#f6f6f6,#ececec 50%,#f0f0f0)"></div>
<div class="a" style="left:1216px;top:131px;width:59px;height:24px;background:linear-gradient(#f6f6f6,#ececec 50%,#f0f0f0)"></div>
<div class="a" style="left:1276px;top:131px;width:59px;height:24px;background:linear-gradient(#f6f6f6,#ececec 50%,#f0f0f0)"></div>
<div class="a" style="left:1336px;top:131px;width:58px;height:24px;background:linear-gradient(#f6f6f6,#ececec 50%,#f0f0f0)"></div>
<div class="a" style="left:1395px;top:131px;width:59px;height:24px;background:linear-gradient(#f6f6f6,#ececec 50%,#f0f0f0)"></div>
<div class="a" style="left:1155px;top:156px;width:300px;height:643px;background:#fff;border-left:1px solid #d0d0d0;border-right:1px solid #d8d8d8;border-bottom:1px solid #bdbdbd"></div>
<div class="a" style="left:1156px;top:177px;width:298px;height:20px;background:#0a4bd9"></div>
<div class="a" style="left:1183px;top:159px;font-size:13px;line-height:16px;color:#000">0</div>
<div class="a" style="left:1183px;top:179px;font-size:13px;line-height:16px;color:#fff">Imagen</div>
<svg class="a" style="left:1154px;top:107px" width="301" height="100" viewBox="1154 107 301 100">
<defs>
<g id="eye"><path d="M-7.4 0 Q-6.5 -5.8 0.3 -5.6 Q6.8 -5.5 7.5 0.2 Q6.2 5.5 0 5.5 Q-6.2 5.4 -7.4 0 Z M-5.2 1 Q-4.2 -1.6 0 -1.8 Q4.3 -1.7 5.2 1 Q4 3.9 0 4 Q-4.1 3.9 -5.2 1 Z" fill="#000" fill-rule="evenodd"/><path d="M-3.3 -1.5 Q0 -2.2 3.3 -1.5 Q3.3 2.6 0 2.8 Q-3.3 2.6 -3.3 -1.5 Z" fill="#000"/><path d="M-1 -1 Q-0.3 0.8 0.8 1.2" stroke="#fff" stroke-width="0.5" fill="none" opacity="0.7"/></g>
<g id="lock"><path d="M-3.9 0.5 V-2.3 A3.9 3.9 0 0 1 3.9 -2.3 V0.5" fill="none" stroke="#b8b8b8" stroke-width="1.5"/><rect x="-5" y="0.5" width="10" height="7.8" fill="#b8b8b8"/></g>
<g id="pencil"><path d="M0 0 L12.5 -13" stroke="#6a4a18" stroke-width="3" stroke-linecap="round"/><path d="M0.3 -0.3 L12.5 -13" stroke="#e8b048" stroke-width="1.8" stroke-linecap="round"/><path d="M11 -11.5 L13 -13.6" stroke="#e02828" stroke-width="2.4" stroke-linecap="round"/><path d="M-0.5 0.5 L1.8 -3 L3 -1.8 Z" fill="#333"/></g>
</defs>
<circle cx="1164" cy="118" r="7" fill="#6d6d6d"/>
<path d="M1161 115L1167 121M1167 115L1161 121" stroke="#fff" stroke-width="1.8"/>
<circle cx="1182" cy="118" r="7" fill="#6d6d6d"/>
<rect x="1180.5" y="114.5" width="5" height="4" fill="none" stroke="#fff" stroke-width="1"/>
<rect x="1178.5" y="117" width="5" height="4" fill="#6d6d6d" stroke="#fff" stroke-width="1"/>
<use href="#eye" x="1185" y="142.5"/>
<g opacity="0.35"><use href="#eye" x="1245" y="142.5"/></g>
<path d="M1299 142.5H1311M1305 136.5V148.5" stroke="#f00000" stroke-width="3.6"/>
<path d="M1358.7 142.8H1370.9" stroke="#f00000" stroke-width="3.8"/>
<use href="#pencil" x="1418.5" y="149.5"/>
<rect x="1161.5" y="163.5" width="15" height="8.5" fill="#fff" stroke="#000" stroke-width="1"/>
<rect x="1161" y="183" width="16" height="9" fill="#333c48"/>
<use href="#eye" x="1422.5" y="166.5"/>
<use href="#lock" x="1445" y="166"/>
<use href="#pencil" x="1395.5" y="193"/>
<use href="#eye" x="1422.5" y="186.5"/>
<use href="#lock" x="1445" y="186"/>
</svg>
<div id="rtb" class="a"></div>
<svg class="a" style="left:1455px;top:107px" width="45" height="691" viewBox="1455 107 45 691">
<defs>
<g id="win"><rect x="0.5" y="0.5" width="27" height="27" fill="#fff" stroke="#222" stroke-width="1"/><rect x="0" y="0" width="28" height="4.8" fill="#000"/><rect x="1.3" y="1.2" width="3.2" height="3" fill="#fff"/></g>
</defs>
<g fill="#9a9a9a">
<circle cx="1463" cy="117" r="0.9"/><circle cx="1469" cy="117" r="0.9"/><circle cx="1475" cy="117" r="0.9"/><circle cx="1481" cy="117" r="0.9"/><circle cx="1487" cy="117" r="0.9"/>
<circle cx="1458" cy="262" r="0.65"/><circle cx="1461" cy="262" r="0.65"/><circle cx="1464" cy="262" r="0.65"/><circle cx="1467" cy="262" r="0.65"/><circle cx="1470" cy="262" r="0.65"/><circle cx="1473" cy="262" r="0.65"/><circle cx="1476" cy="262" r="0.65"/><circle cx="1479" cy="262" r="0.65"/><circle cx="1482" cy="262" r="0.65"/><circle cx="1485" cy="262" r="0.65"/><circle cx="1488" cy="262" r="0.65"/><circle cx="1491" cy="262" r="0.65"/><circle cx="1494" cy="262" r="0.65"/><circle cx="1497" cy="262" r="0.65"/>
<circle cx="1458" cy="409" r="0.65"/><circle cx="1461" cy="409" r="0.65"/><circle cx="1464" cy="409" r="0.65"/><circle cx="1467" cy="409" r="0.65"/><circle cx="1470" cy="409" r="0.65"/><circle cx="1473" cy="409" r="0.65"/><circle cx="1476" cy="409" r="0.65"/><circle cx="1479" cy="409" r="0.65"/><circle cx="1482" cy="409" r="0.65"/><circle cx="1485" cy="409" r="0.65"/><circle cx="1488" cy="409" r="0.65"/><circle cx="1491" cy="409" r="0.65"/><circle cx="1494" cy="409" r="0.65"/><circle cx="1497" cy="409" r="0.65"/>
<circle cx="1458" cy="512" r="0.65"/><circle cx="1461" cy="512" r="0.65"/><circle cx="1464" cy="512" r="0.65"/><circle cx="1467" cy="512" r="0.65"/><circle cx="1470" cy="512" r="0.65"/><circle cx="1473" cy="512" r="0.65"/><circle cx="1476" cy="512" r="0.65"/><circle cx="1479" cy="512" r="0.65"/><circle cx="1482" cy="512" r="0.65"/><circle cx="1485" cy="512" r="0.65"/><circle cx="1488" cy="512" r="0.65"/><circle cx="1491" cy="512" r="0.65"/><circle cx="1494" cy="512" r="0.65"/><circle cx="1497" cy="512" r="0.65"/>
</g>
<rect x="1456.5" y="120" width="42" height="42.5" rx="6" fill="#b5b5b5"/>
<rect x="1456.5" y="417.5" width="42" height="42" rx="6" fill="#b5b5b5"/>
<use href="#win" x="1463" y="127"/>
<path d="M1470.5 140.5 L1475 138 V150.5 L1470.5 152 Z" fill="#9a9a9a" stroke="#555" stroke-width="0.5"/>
<path d="M1473.5 139.5 L1483.5 135.5 V147 L1473.5 150.5 Z" fill="#f4f4f4" stroke="#666" stroke-width="0.6"/>
<path d="M1476.5 147 L1481 139.5 L1481.5 145.5 Z" fill="none" stroke="#e03030" stroke-width="0.7"/>
<use href="#win" x="1463" y="174"/>
<rect x="1470" y="184.3" width="11" height="7.7" fill="#f8ecc0" stroke="#666" stroke-width="0.7"/>
<circle cx="1479" cy="191.2" r="4.2" fill="#f8ecc0" fill-opacity="0.85" stroke="#666" stroke-width="0.7"/>
<use href="#win" x="1463" y="220"/>
<rect x="1468.5" y="229.5" width="17" height="12" rx="2" fill="#eef0f4" stroke="#b8c8e0" stroke-width="0.8"/>
<use href="#win" x="1463" y="276"/>
<g fill="#000"><rect x="1466" y="283" width="4" height="3" rx="0.8"/><rect x="1466" y="289" width="4" height="3" rx="0.8"/><rect x="1466" y="295" width="4" height="3" rx="0.8"/></g>
<g fill="none" stroke="#222" stroke-width="0.7"><rect x="1473.5" y="283.5" width="14" height="2.5"/><rect x="1473.5" y="289.5" width="14" height="2.5"/><rect x="1473.5" y="295.5" width="14" height="2.5"/></g>
<use href="#win" x="1463" y="322"/>
<path d="M1469.5 331.5 Q1477 329 1484.5 331.5 L1479 337.5 V345 L1476.5 344 V337.5 Z" fill="#9a9a9a" stroke="#555" stroke-width="0.6"/>
<use href="#win" x="1463" y="368"/>
<path d="M1469 377 L1473.5 380 V388 L1469 391 Z" fill="#f4f4f4" stroke="#555" stroke-width="0.7"/>
<rect x="1473.5" y="380" width="8.5" height="8" rx="1" fill="#8a8a8a" stroke="#555" stroke-width="0.6"/>
<path d="M1466.5 384.2 H1486" stroke="#f08080" stroke-width="0.6" stroke-dasharray="1 1"/>
<use href="#win" x="1463" y="424"/>
<g fill="#9a9a9a"><rect x="1466" y="432" width="8" height="0.7"/><rect x="1466" y="435.3" width="9" height="0.7"/><rect x="1466" y="438.6" width="11" height="0.7"/><rect x="1466" y="441.9" width="11" height="0.7"/></g>
<path d="M1463.5 446.5 H1490.5" stroke="#222" stroke-width="0.7"/>
<rect x="1466" y="448" width="2.5" height="1" fill="#555"/><rect x="1472" y="448" width="16" height="1" fill="#555"/>
<use href="#win" x="1463" y="471"/>
<rect x="1470.5" y="479" width="13" height="15" rx="1" fill="#c8872c" stroke="#8a5a14" stroke-width="0.6"/>
<rect x="1472.5" y="481" width="9" height="11.5" fill="#f4f4f4"/>
<rect x="1474.5" y="477.5" width="5" height="3" rx="0.8" fill="#8a8a8a"/>
<path d="M1474 484H1480M1474 486H1480M1474 488H1479" stroke="#bbb" stroke-width="0.6"/>
<g fill="none" stroke="#111" stroke-width="1.5" stroke-linejoin="miter">
<path d="M1465.5 533.5 H1475.5 L1470.5 540 H1472.5 Q1476.5 540 1476.5 544 V545 Q1476.5 549 1472.5 549 H1465.5"/>
<path d="M1480.5 533.5 H1485 Q1489.8 533.5 1489.8 538.5 V544 Q1489.8 549 1485 549 H1480.5 Z"/>
</g>
</svg>
<div id="status" class="a"></div>
<div class="st" style="left:2px;top:807px">1,46.5</div>
<div class="st" style="left:2px;top:827px">@-19,26.5</div>
<div class="a" style="left:253px;top:802px;width:1px;height:40px;background:#8a8a8a"></div>
<div class="st" style="left:256px;top:807px">46.5108&lt;89°</div>
<div class="st" style="left:256px;top:827px">@32.6075&lt;126°</div>
<div class="dot" style="left:506px;top:818px"></div>
<div class="st" style="left:499px;top:811.5px;width:200px;text-align:right;line-height:11px">Seleccionar entidad o región<br>Mover entidad o referencia</div>
<svg class="a" style="left:715px;top:804px" width="22" height="34" viewBox="0 0 22 34"><path d="M2.5 9 Q2.5 2 11 2 Q19.5 2 19.5 9 V23 Q19.5 31.5 11 31.5 Q2.5 31.5 2.5 23 Z" fill="#fff" stroke="#333" stroke-width="0.9"/><path d="M2.5 13 Q11 10.5 19.5 13" fill="none" stroke="#333" stroke-width="0.9"/><path d="M11 2 V11.8" stroke="#333" stroke-width="0.8"/><rect x="9.5" y="4" width="3" height="6" rx="1.5" fill="#fff" stroke="#333" stroke-width="0.8"/></svg>
<div class="dot" style="left:940px;top:818px"></div>
<div class="st" style="left:949px;top:811.5px;line-height:11px">Las entidades seleccionadas:<br>1 Imagen en capa "Imagen".</div>
<div class="dot" style="left:1269px;top:818px"></div>


<svg class="a" style="left:0;top:220px" width="120" height="120" viewBox="0 220 120 120">
<defs><linearGradient id="rfh" x1="0" x2="1"><stop offset="0" stop-color="#d84a4a" stop-opacity="0.2"/><stop offset="0.12" stop-color="#d84a4a"/><stop offset="0.85" stop-color="#d84a4a"/><stop offset="1" stop-color="#d84a4a" stop-opacity="0"/></linearGradient>
<linearGradient id="rfv" x1="0" x2="0" y1="0" y2="1"><stop offset="0" stop-color="#d84a4a" stop-opacity="0"/><stop offset="0.15" stop-color="#d84a4a"/><stop offset="0.85" stop-color="#d84a4a"/><stop offset="1" stop-color="#d84a4a" stop-opacity="0"/></linearGradient></defs>
<rect x="0" y="260" width="45" height="1.4" fill="url(#rfh)"/>
<rect x="0" y="295" width="45" height="1.4" fill="url(#rfh)"/>
<rect x="0.8" y="252" width="1.4" height="50" fill="url(#rfv)"/>
<rect x="35.2" y="252" width="1.4" height="50" fill="url(#rfv)"/>
<filter id="ringblur" x="-20%" y="-20%" width="140%" height="140%"><feGaussianBlur stdDeviation="1.2"/></filter>
<g filter="url(#ringblur)">
<circle cx="28.3" cy="285.5" r="33" fill="none" stroke="#f4f8fc" stroke-opacity="0.35" stroke-width="3"/>
<circle cx="28.3" cy="285.5" r="35.5" fill="none" stroke="#98b2c8" stroke-opacity="0.5" stroke-width="6.5"/>
<circle cx="28.3" cy="285.5" r="37.3" fill="none" stroke="#7e9cb8" stroke-opacity="0.35" stroke-width="1.5"/>
</g>
</svg>
<div class="a" style="left:13px;top:312.5px;width:184px;height:25.5px;border-radius:3px;background:linear-gradient(#f7f8fa,#e9edf2 60%,#dfe5eb);box-shadow:1px 1.5px 0.5px rgba(60,60,60,0.75);font-size:14px;line-height:16px;padding:5px 0 0 5px;color:#0c0c0c;white-space:nowrap">Alinear puntos de referencia</div>
<svg class="a" style="left:20px;top:280px" width="30" height="40" viewBox="20 280 30 40">
<path d="M26.2 286.2 V307.5 L31.5 302.5 L36.3 312.3 L39.8 310.7 L35.5 301.4 H41.8 Z" fill="#fff" stroke="#fff" stroke-width="3" stroke-linejoin="round"/>
<path d="M26.2 286.2 V307.5 L31.5 302.5 L36.3 312.3 L39.8 310.7 L35.5 301.4 H41.8 Z" fill="#fff" stroke="#000" stroke-width="1.4" stroke-linejoin="miter"/>
</svg>
<div class="a" style="left:0;top:106px;width:1500px;height:1.5px;background:#b9b9b9"></div>
</body></html>
